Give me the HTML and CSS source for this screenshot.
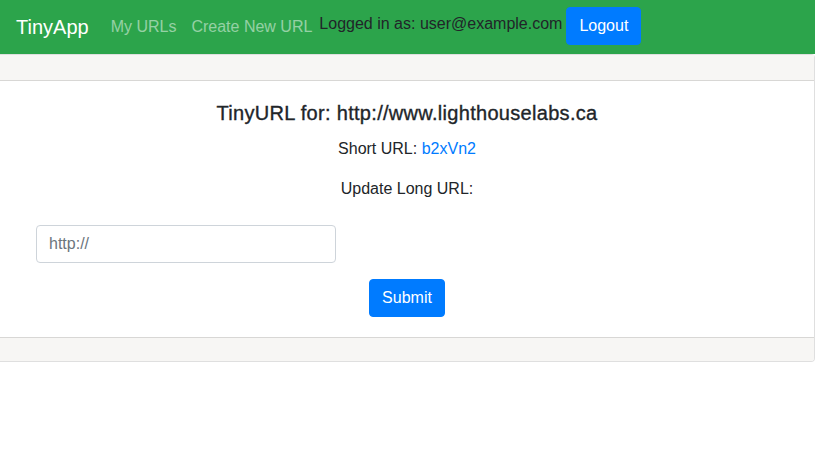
FILE: index.html
```html
<!DOCTYPE html>
<html>
<head>
<meta charset="utf-8">
<link rel="stylesheet" href="styles.css">
</head>
<body>
<nav class="navbar">
  <a class="brand" href="#">TinyApp</a>
  <a class="nav-link" href="#">My URLs</a>
  <a class="nav-link" href="#">Create New URL</a>
  <span class="logged">Logged in as: user@example.com</span>
  <button class="btn btn-logout">Logout</button>
</nav>
<div class="card">
  <div class="card-header"></div>
  <div class="card-body">
    <h5 class="card-title">TinyURL for: http://www.lighthouselabs.ca</h5>
    <p class="card-text">Short URL: <a class="short" href="#">b2xVn2</a></p>
    <p class="card-text">Update Long URL:</p>
    <form class="form">
      <div class="form-row">
        <input class="form-control" type="text" placeholder="http://">
      </div>
      <button class="btn btn-submit" type="button">Submit</button>
    </form>
  </div>
  <div class="card-footer"></div>
</div>
</body>
</html>
```
FILE: styles.css
```css
* { box-sizing: border-box; }
body {
  margin: 0;
  font-family: "Liberation Sans", Arial, sans-serif;
  font-size: 16px;
  line-height: 1.5;
  color: #212529;
  background: #fff;
}
.navbar {
  display: flex;
  align-items: center;
  height: 54px;
  padding: 8px 16px;
  background: #2ca44b;
}
.brand {
  font-size: 20px;
  line-height: 30px;
  color: #fff;
  text-decoration: none;
  margin-right: 14px;
}
.nav-link {
  padding: 8px 7px 8px 8px;
  color: rgba(255,255,255,0.5);
  text-decoration: none;
}
.logged {
  color: #212529;
  margin-top: -6px;
  margin-right: 4px;
}
.btn {
  font-family: inherit;
  font-size: 16px;
  line-height: 24px;
  padding: 6px 12px;
  border: 1px solid #007bff;
  border-radius: 4px;
  background: #007bff;
  color: #fff;
  cursor: pointer;
}
.btn-logout { margin-top: -2px; }
.card {
  border: 1px solid rgba(0,0,0,0.125);
  border-left: none;
  border-radius: 0 4px 4px 0;
}
.card-header {
  height: 26px;
  background: #f7f6f4;
  border-bottom: 1px solid rgba(0,0,0,0.125);
}
.card-body {
  padding: 20px;
  text-align: center;
}
.card-title {
  margin: 0 0 12px;
  font-size: 20px;
  font-weight: 500;
  line-height: 24px;
  letter-spacing: 0.3px;
  -webkit-text-stroke: 0.35px #212529;
}
.card-text {
  margin: 0 0 16px;
}
.short {
  color: #007bff;
  text-decoration: none;
}
.form {
  padding-top: 8px;
  display: flex;
  flex-direction: column;
  align-items: center;
  gap: 16px;
}
.form-row {
  align-self: stretch;
  display: flex;
  padding-left: 16px;
}
.form-control {
  width: 300px;
  height: 38px;
  padding: 6px 12px;
  font-family: inherit;
  font-size: 16px;
  color: #495057;
  border: 1px solid #ced4da;
  border-radius: 4px;
}
.form-control::placeholder { color: #6c757d; }
.card-footer {
  height: 24px;
  background: #f7f6f4;
  border-top: 1px solid rgba(0,0,0,0.125);
  border-radius: 0 0 3px 0;
}
```
